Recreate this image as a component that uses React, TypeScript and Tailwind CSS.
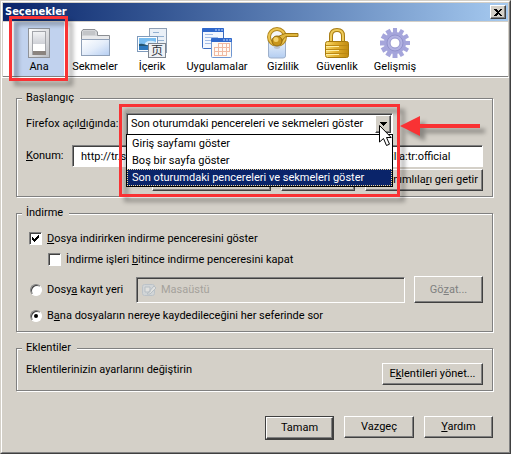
import { useState } from "react";
import type { ReactNode } from "react";

const startupChoices = [
  "Giriş sayfamı göster",
  "Boş bir sayfa göster",
  "Son oturumdaki pencereleri ve sekmeleri göster"
];

const raised =
  "border border-t-white border-l-white border-r-[#404040] border-b-[#404040] shadow-[inset_-1px_-1px_0_#808080]";
const sunken =
  "border border-t-[#808080] border-l-[#808080] border-r-white border-b-white shadow-[inset_1px_1px_0_#404040]";

function GeneralIcon() {
  return (
    <svg width="32" height="32" viewBox="0 0 32 32">
      <defs>
        <linearGradient id="plate" x1="0" y1="0" x2="1" y2="1">
          <stop offset="0" stopColor="#ffffff" />
          <stop offset="0.600" stopColor="#d9dadd" />
          <stop offset="1" stopColor="#b9bcc2" />
        </linearGradient>
        <linearGradient id="rocker" x1="0" y1="0" x2="0" y2="1">
          <stop offset="0" stopColor="#f1f2f4" />
          <stop offset="1" stopColor="#cfd1d7" />
        </linearGradient>
      </defs>
      <rect x="5.500" y="1.500" width="21" height="29" fill="url(#plate)" stroke="#8f9298" />
      <rect x="9.500" y="4.500" width="13" height="23" fill="#fff" stroke="#a4a6ab" />
      <rect x="10" y="5" width="12" height="12" fill="url(#rocker)" />
      <rect x="10" y="24" width="13" height="4" fill="#8b847f" />
    </svg>
  );
}

function TabsIcon() {
  return (
    <svg width="32" height="32" viewBox="0 0 32 32">
      <defs>
        <linearGradient id="folder" x1="0" y1="0" x2="1" y2="1">
          <stop offset="0" stopColor="#ffffff" />
          <stop offset="0.500" stopColor="#e4edfa" />
          <stop offset="1" stopColor="#b4cdf2" />
        </linearGradient>
      </defs>
      <path d="M2.500 28.500V4.500L4 2.500H16L18.500 5V8.500H30.500V28.500Z" fill="#d3d5d8" stroke="#8b8e93" />
      <path d="M4 4H16V8H4Z" fill="#c3c5c8" />
      <path d="M3 9H30V12H3Z" fill="#e8e9eb" />
      <rect x="2.500" y="12.500" width="28" height="16" fill="url(#folder)" stroke="#8fa0b8" />
    </svg>
  );
}

function ContentIcon() {
  return (
    <svg width="32" height="32" viewBox="0 0 32 32">
      <rect x="13.500" y="1.500" width="17" height="24" fill="#eaf0f7" stroke="#8fa0b5" />
      <path d="M17 5.500H23M17 9.500H28M17 13.500H28" stroke="#93b1d2" />
      <rect x="1.500" y="9.500" width="20" height="15" fill="#fff" stroke="#7e9abb" />
      <rect x="3" y="11" width="17" height="6" fill="#79bdf0" />
      <path d="M9 16Q13 12 20 15V19H9Z" fill="#d5ecfb" />
      <rect x="3" y="18" width="17" height="5" fill="#2c78bd" />
      <path d="M3 17Q8 16 12 19H3Z" fill="#245571" />
      <rect x="12.500" y="16.500" width="17" height="14" fill="#eef1f5" stroke="#7d858f" />
      <text x="15" y="28" fontSize="12" fill="#30363d" fontFamily="'Noto Sans CJK SC', sans-serif">
        页
      </text>
    </svg>
  );
}

function ApplicationsIcon() {
  return (
    <svg width="32" height="32" viewBox="0 0 32 32">
      <rect x="1.500" y="1.500" width="21" height="20" rx="1" fill="#f3f7fe" stroke="#3c6dc0" />
      <rect x="1" y="1" width="22" height="4" rx="1" fill="#2f68cb" />
      <path d="M14 3H16M17 3H19M20 3H22" stroke="#bdd4ff" />
      <path d="M4 7.500H12M4 10.500H17M4 13.500H11M4 16.500H12" stroke="#a2bce6" />
      <rect x="10.500" y="11.500" width="20" height="19" rx="1" fill="#fffaf5" stroke="#6e96d2" />
      <rect x="10" y="11" width="21" height="4" rx="1" fill="#2f68cb" />
      <path d="M22 13H24M25 13H27M28 13H30" stroke="#bdd4ff" />
      <path
        d="M17 16.500H29M13 20.500H29M13 24.500H29M13 28.500H25M13.500 20V29M17.500 16V29M21.500 16V29M25.500 16V29M28.500 16V25"
        stroke="#f0b9a2"
      />
    </svg>
  );
}

function PrivacyIcon() {
  return (
    <svg width="32" height="32" viewBox="0 0 32 32">
      <defs>
        <linearGradient id="hanger" x1="0" y1="0" x2="0" y2="1">
          <stop offset="0" stopColor="#eef4fc" />
          <stop offset="1" stopColor="#b3cdf1" />
        </linearGradient>
      </defs>
      <path d="M1.500 13V29Q1.500 31 4 31H16Q18.500 31 18.500 29V13Z" fill="url(#hanger)" stroke="#9eb0cb" />
      <circle cx="10" cy="10" r="8" fill="#f4f6fa" stroke="#b1861f" strokeWidth="4" />
      <circle cx="10" cy="10" r="8" fill="none" stroke="#edc651" strokeWidth="2" />
      <path d="M7 17H13V21Q10 23 7 21Z" fill="#b9c2d0" />
      <path d="M10 10L18 6.500H31V9.500H19L13 15Z" fill="#dfb63e" stroke="#a27813" />
      <circle cx="10" cy="14" r="5" fill="#c8951b" stroke="#90680b" />
      <circle cx="9" cy="12.500" r="2.500" fill="#f2d06a" />
    </svg>
  );
}

function SecurityIcon() {
  return (
    <svg width="32" height="32" viewBox="0 0 32 32">
      <defs>
        <linearGradient id="brass" x1="0" y1="0" x2="1" y2="0">
          <stop offset="0" stopColor="#f8dc72" />
          <stop offset="0.400" stopColor="#e5b433" />
          <stop offset="1" stopColor="#c08a10" />
        </linearGradient>
      </defs>
      <path d="M10 15V9Q10 3 16 3T22 9V15" fill="none" stroke="#a87c12" strokeWidth="4" />
      <path d="M10 15V9Q10 3 16 3T22 9V15" fill="none" stroke="#eecb5b" strokeWidth="2" />
      <rect x="4.500" y="14.500" width="23" height="16" rx="2" fill="url(#brass)" stroke="#a67a0e" />
      <path d="M5 18.500H27M5 22.500H27M5 26.500H27" stroke="#bb8813" />
      <path d="M5 19.500H18M5 23.500H18M5 27.500H18" stroke="#fff0a6" />
    </svg>
  );
}

function AdvancedIcon() {
  return (
    <svg width="32" height="32" viewBox="0 0 32 32">
      <g fill="#a5a5db">
        {[0, 30, 60, 90, 120, 150].map((angle) => (
          <path key={angle} d="M14 1H18L18.500 31H13.500Z" transform={`rotate(${angle} 16 16)`} />
        ))}
        <circle cx="16" cy="16" r="11" />
      </g>
      <circle cx="16" cy="16" r="8" fill="#b2b2e2" stroke="#9292cc" />
      <circle cx="16" cy="16" r="5" fill="#fff" stroke="#9393cd" />
    </svg>
  );
}

const categories = [
  { label: "Ana", icon: <GeneralIcon />, width: "w-[50px]" },
  { label: "Sekmeler", icon: <TabsIcon />, width: "w-[62px]" },
  { label: "İçerik", icon: <ContentIcon />, width: "w-[52px]" },
  { label: "Uygulamalar", icon: <ApplicationsIcon />, width: "w-[78px]" },
  { label: "Gizlilik", icon: <PrivacyIcon />, width: "w-[54px]" },
  { label: "Güvenlik", icon: <SecurityIcon />, width: "w-[54px]" },
  { label: "Gelişmiş", icon: <AdvancedIcon />, width: "w-[62px]" }
];

function Button({
  children,
  label,
  className = "",
  disabled = false
}: {
  children?: ReactNode;
  label?: string;
  className?: string;
  disabled?: boolean;
}) {
  return (
    <button
      type="button"
      aria-label={label}
      disabled={disabled}
      className={`h-[22px] whitespace-nowrap text-center disabled:text-[#808080] ${raised} ${className}`}
    >
      {children}
    </button>
  );
}

function Group({
  title,
  className,
  children
}: {
  title: string;
  className: string;
  children: ReactNode;
}) {
  return (
    <fieldset
      className={`min-w-0 border border-[#808080] px-[9px] shadow-[inset_1px_1px_0_#fff,1px_1px_0_#fff] ${className}`}
    >
      <legend className="-ml-1 bg-[#d4d0c8] pr-[6px] pl-1 leading-[14px]">{title}</legend>
      {children}
    </fieldset>
  );
}

// Red frame with its own soft shadow, laid over what it points at
function Highlight({ className }: { className: string }) {
  return (
    <>
      <div
        className={`pointer-events-none absolute translate-x-[5px] translate-y-[5px] border-4 border-black/30 blur-[2px] ${className}`}
      />
      <div className={`pointer-events-none absolute z-20 border-[3px] border-[#f93234] ${className}`} />
    </>
  );
}

export default function App() {
  const [category, setCategory] = useState("Ana");
  const [startup, setStartup] = useState(startupChoices[2]);
  const [showWindow, setShowWindow] = useState(true);
  const [closeWindow, setCloseWindow] = useState(false);
  const [saveMode, setSaveMode] = useState("ask");

  return (
    <div className="min-h-screen border border-t-[#d4d0c8] border-r-[#404040] border-b-[#404040] border-l-[#d4d0c8] bg-[#d4d0c8] font-[Roboto,sans-serif] text-[11px] leading-[14px] text-black">
      <div className="min-h-[452px] border border-t-white border-r-[#808080] border-b-[#808080] border-l-white">
        <header className="mx-px mt-px flex h-[18px] items-center justify-between bg-linear-to-r from-[#0a246a] to-[#a6caf0] px-[2px]">
          <h1 className="font-['DejaVu_Sans_Condensed','DejaVu_Sans',sans-serif] text-[11px] font-bold text-white">
            Seçenekler
          </h1>
          <button
            type="button"
            aria-label="Kapat"
            className={`flex h-[14px] w-4 items-center justify-center bg-[#d4d0c8] ${raised}`}
          >
            <svg width="8" height="7" viewBox="0 0 8 7" shapeRendering="crispEdges">
              <path d="M0 0H2L4 2L6 0H8L5 3.500L8 7H6L4 5L2 7H0L3 3.500Z" />
            </svg>
          </button>
        </header>

        <nav className="mx-px mt-px flex h-[55px] border-b border-[#808080] bg-white pl-[11px]">
          {categories.map((item) => (
            <div key={item.label} className={`relative ${item.width}`}>
              <button
                type="button"
                onClick={() => setCategory(item.label)}
                className={`flex h-[54px] w-full flex-col items-center gap-px pt-[5px] leading-[14px] ${
                  category === item.label ? "bg-[#c1d2ee]" : ""
                }`}
              >
                {item.icon}
                <span>{item.label}</span>
              </button>
              {item.label === "Ana" ? (
                <Highlight className="-top-[6px] -left-[5px] h-[65px] w-[59px]" />
              ) : null}
            </div>
          ))}
        </nav>

        <main className="border-t border-white pt-[13px] pr-4 pb-[11px] pl-[14px]">
          <Group title="Başlangıç" className="pt-2 pb-[5px]">
            <div className="flex items-center">
              <label htmlFor="startup" className="w-[100px] shrink-0">
                Firefox açıl<u>d</u>ığında:
              </label>
              <div className="relative w-[267px]">
                <Highlight className="-top-[9px] -left-[7px] h-[93px] w-[281px]" />
                <select
                  id="startup"
                  value={startup}
                  onChange={(event) => setStartup(event.target.value)}
                  className={`relative block h-[22px] w-full appearance-none bg-white pl-1 outline-none ${sunken}`}
                >
                  {startupChoices.map((choice) => (
                    <option key={choice}>{choice}</option>
                  ))}
                </select>
                <span
                  className={`pointer-events-none absolute top-[2px] right-[2px] flex h-[18px] w-4 items-center justify-center bg-[#d4d0c8] ${raised}`}
                >
                  <svg width="7" height="4" viewBox="0 0 7 4" shapeRendering="crispEdges">
                    <path d="M0 0H7V1H6V2H5V3H4V4H3V3H2V2H1V1H0Z" />
                  </svg>
                </span>
                <ul
                  role="listbox"
                  aria-label="Firefox açıldığında"
                  className="absolute top-[21px] left-0 z-10 w-full border border-black bg-white"
                >
                  {startupChoices.map((choice) => (
                    <li
                      key={choice}
                      role="option"
                      aria-selected={choice === startup}
                      onClick={() => setStartup(choice)}
                      className={`h-[17px] border pl-1 leading-[15px] ${
                        choice === startup
                          ? "border-dotted border-[#f5db95] bg-[#0a246a] text-white"
                          : "border-transparent"
                      }`}
                    >
                      {choice}
                    </li>
                  ))}
                </ul>
                <svg
                  className="pointer-events-none absolute top-[12px] left-[253px] z-30"
                  width="13"
                  height="22"
                  viewBox="0 0 13 22"
                >
                  <path
                    d="M0.500 0.500V17L4.500 13.500L7.500 20.500L10.500 19.200L7.500 12.500H12.200Z"
                    fill="#fff"
                    stroke="#000"
                  />
                </svg>
                <svg
                  className="pointer-events-none absolute top-[2px] left-[273px] z-30"
                  width="90"
                  height="34"
                  viewBox="0 0 90 34"
                >
                  <path
                    d="M6 16L26 6V14H86V18H26V26Z"
                    fill="#000"
                    fillOpacity="0.350"
                    className="blur-[2px]"
                  />
                  <path d="M1 11L21 1V9H81V13H21V21Z" fill="#f93234" />
                </svg>
              </div>
            </div>

            <div className="mt-[10px] flex items-center">
              <label htmlFor="homepage" className="w-[46px] shrink-0">
                <u>K</u>onum:
              </label>
              <input
                id="homepage"
                type="text"
                defaultValue="http://tr.start2.mozilla.com/firefox?client=firefox-a&rls=org.mozilla:tr:official"
                className={`h-[22px] min-w-0 flex-1 bg-white pl-2 outline-none ${sunken}`}
              />
            </div>

            <div className="mt-[2px] flex justify-end gap-[10px]">
              <Button className="w-[119px]" label="Geçerli sayfayı kullan" />
              <Button className="w-[74px]" label="Yer imi kullan" />
              <Button className="w-[118px]">
                Öntanımlıla<u>r</u>ı geri getir
              </Button>
            </div>
          </Group>

          <Group title="İndirme" className="mt-[9px] pt-[11px] pb-2">
            <label className="flex h-[15px] items-center gap-[5px] pl-[3px]">
              <span className="relative flex">
                <input
                  type="checkbox"
                  checked={showWindow}
                  onChange={(event) => setShowWindow(event.target.checked)}
                  className={`size-[13px] appearance-none bg-white ${sunken}`}
                />
                {showWindow ? <CheckMark /> : null}
              </span>
              <span>
                <u>D</u>osya indirirken indirme penceresini göster
              </span>
            </label>
            <label className="mt-[6px] flex h-[15px] items-center gap-[5px] pl-[22px]">
              <span className="relative flex">
                <input
                  type="checkbox"
                  checked={closeWindow}
                  onChange={(event) => setCloseWindow(event.target.checked)}
                  className={`size-[13px] appearance-none bg-white ${sunken}`}
                />
                {closeWindow ? <CheckMark /> : null}
              </span>
              <span>
                İndirme işleri <u>b</u>itince indirme penceresini kapat
              </span>
            </label>
            <div className="mt-[9px] flex h-[27px] items-center">
              <label className="flex w-[110px] shrink-0 items-center gap-[5px] pl-1">
                <Radio checked={saveMode === "folder"} onChange={() => setSaveMode("folder")} />
                <span>
                  Dosy<u>a</u> kayıt yeri
                </span>
              </label>
              <div className={`flex h-[26px] min-w-0 flex-1 items-center gap-1 pl-1 ${sunken}`}>
                <svg width="16" height="16" viewBox="0 0 16 16" className="shrink-0 opacity-50">
                  <rect x="1.500" y="2.500" width="12" height="11" rx="2" fill="#cfdbe6" stroke="#a4b6c9" />
                  <path d="M4 5H9V10H4ZM6 12L13 4L15 6L9 12Z" fill="#eef2f6" stroke="#9aadc0" />
                </svg>
                <input
                  type="text"
                  aria-label="Dosya kayıt yeri"
                  disabled
                  defaultValue="Masaüstü"
                  className="min-w-0 flex-1 bg-transparent text-[#a5a29c]"
                />
              </div>
              <Button disabled className="ml-[9px] h-[27px] w-[69px]">
                Gö<u>z</u>at...
              </Button>
            </div>
            <label className="mt-[5px] flex h-[15px] items-center gap-[5px] pl-1">
              <Radio checked={saveMode === "ask"} onChange={() => setSaveMode("ask")} />
              <span>
                B<u>a</u>na dosyaların nereye kaydedileceğini her seferinde sor
              </span>
            </label>
          </Group>

          <Group title="Eklentiler" className="mt-[9px] pt-2 pb-[5px]">
            <div className="flex items-start justify-between">
              <p>Eklentilerinizin ayarlarını değiştirin</p>
              <Button className="w-[101px]">
                E<u>k</u>lentileri yönet...
              </Button>
            </div>
          </Group>

          <footer className="mt-[25px] flex justify-end gap-[10px]">
            <div className="flex border border-[#404040]">
              <Button className="h-5 w-[67px]">Tamam</Button>
            </div>
            <Button className="w-[70px]">Vazgeç</Button>
            <Button className="w-[69px]">
              <u>Y</u>ardım
            </Button>
          </footer>
        </main>
      </div>
    </div>
  );
}

function CheckMark() {
  return (
    <svg
      className="pointer-events-none absolute top-[3px] left-[3px]"
      width="7"
      height="7"
      viewBox="0 0 7 7"
      shapeRendering="crispEdges"
    >
      <path d="M0 2L2 4L7 0V3L2 7L0 5Z" />
    </svg>
  );
}

function Radio({ checked, onChange }: { checked: boolean; onChange: () => void }) {
  return (
    <span className="relative flex">
      <input
        type="radio"
        name="save"
        checked={checked}
        onChange={onChange}
        className="size-3 appearance-none rounded-full border border-t-[#808080] border-r-white border-b-white border-l-[#808080] bg-white shadow-[inset_1px_1px_0_#404040]"
      />
      {checked ? (
        <span className="pointer-events-none absolute top-1 left-1 size-1 rounded-full bg-black" />
      ) : null}
    </span>
  );
}
